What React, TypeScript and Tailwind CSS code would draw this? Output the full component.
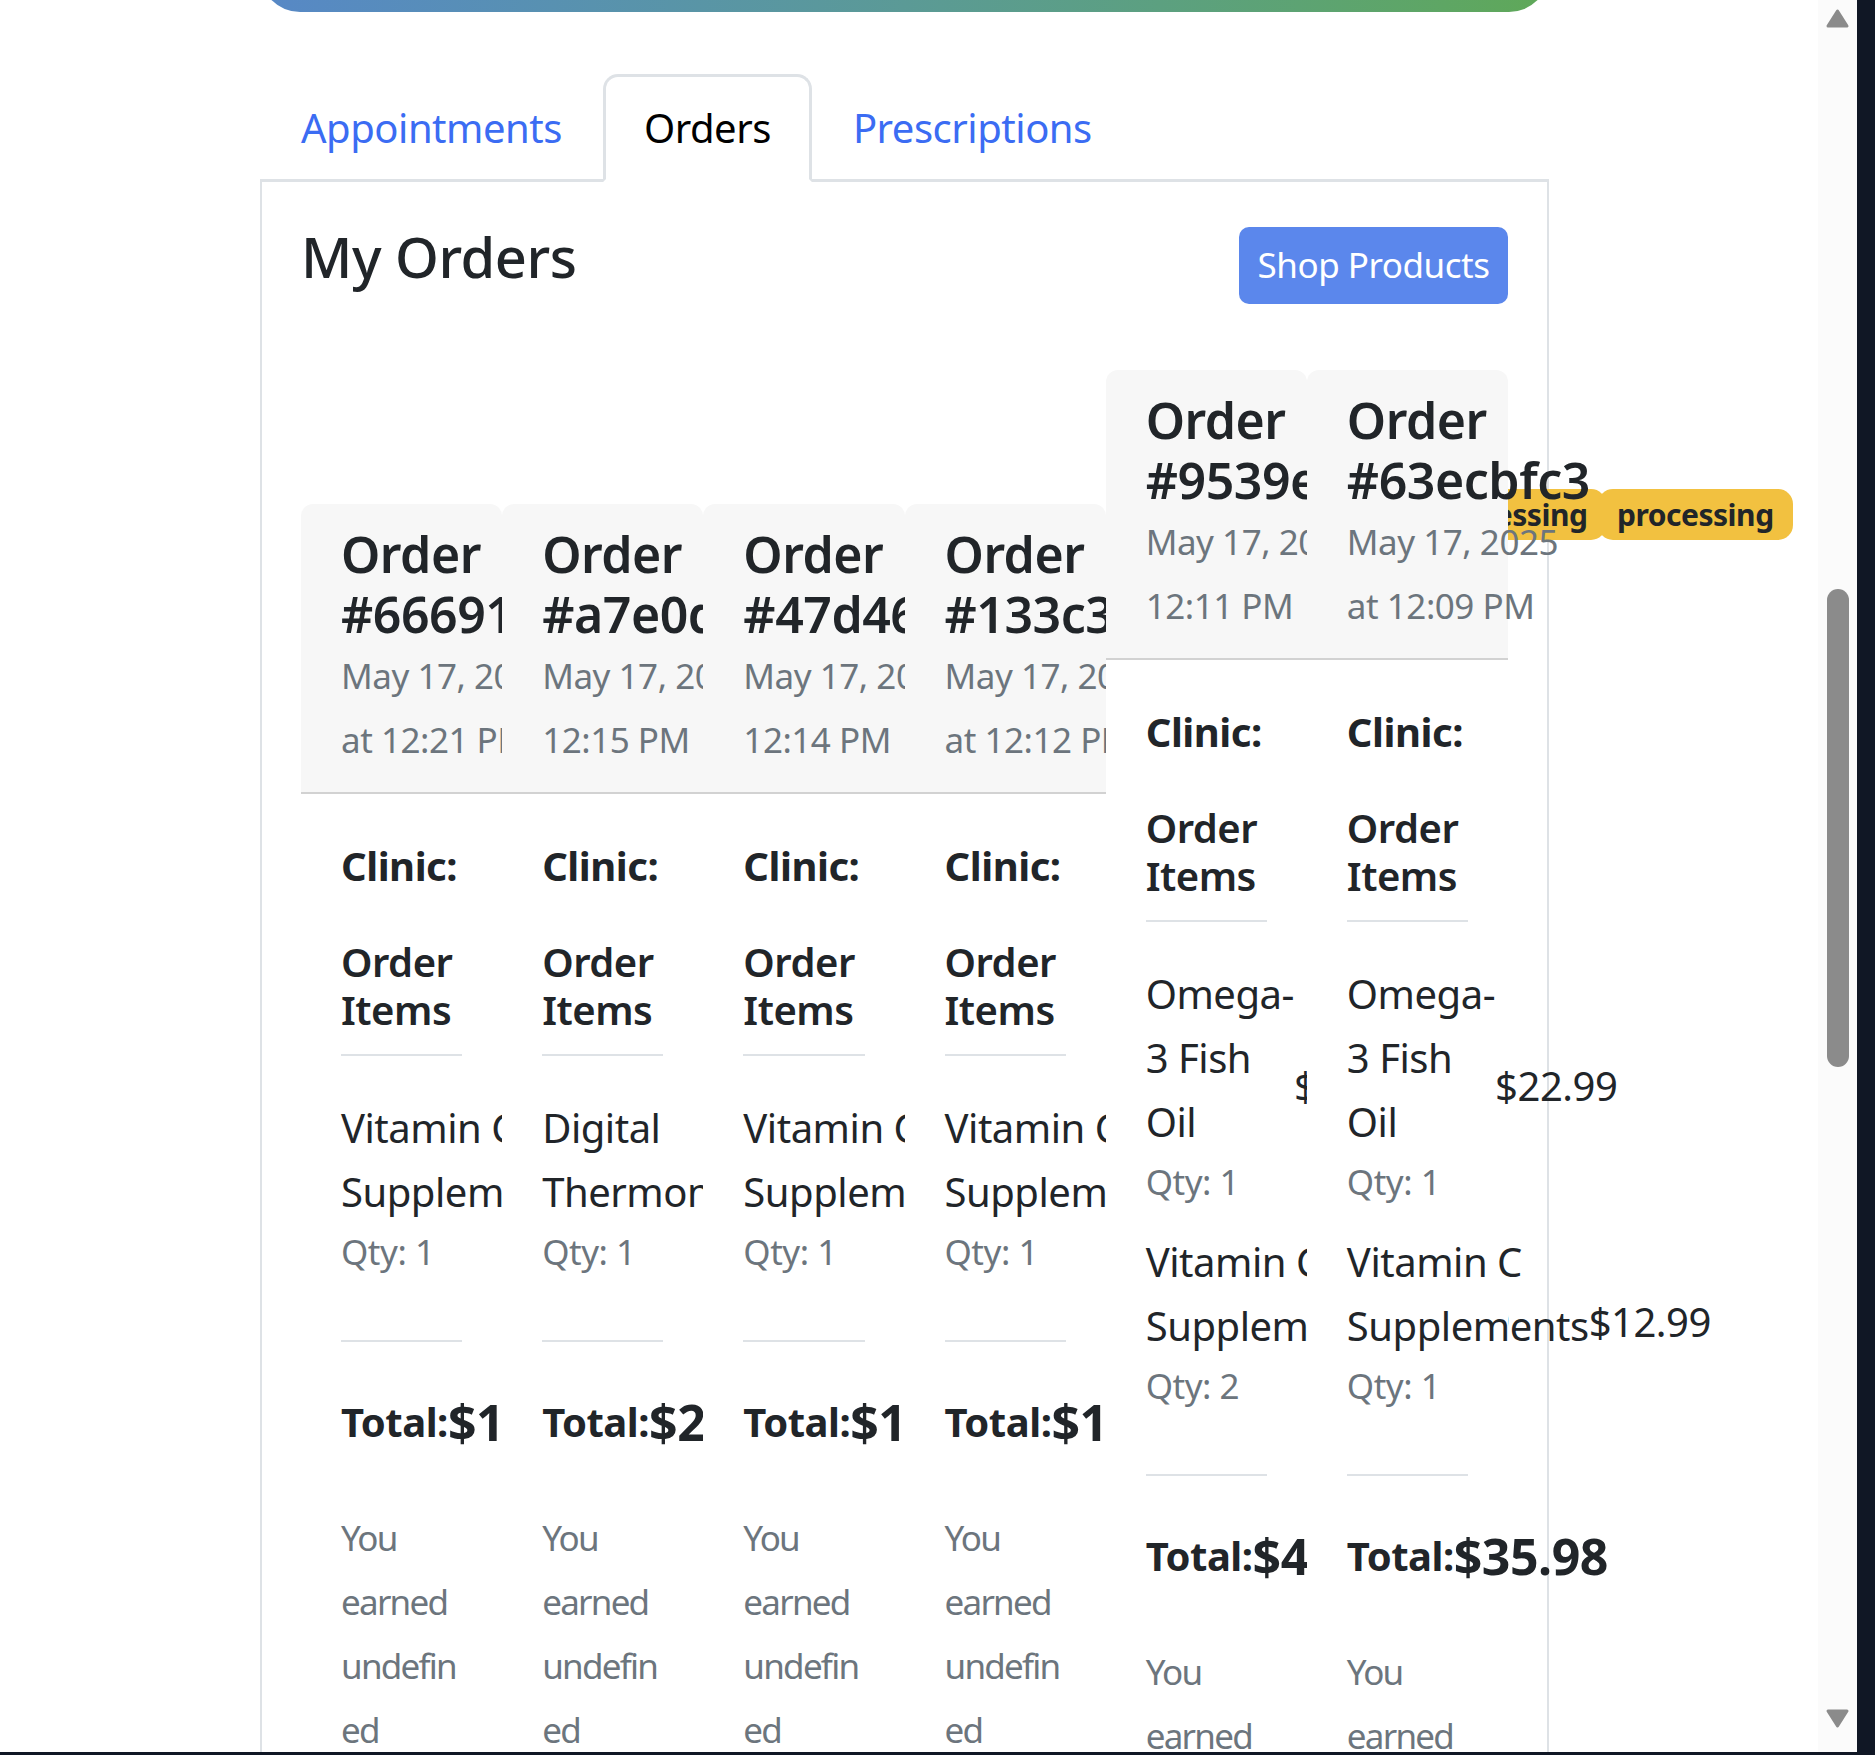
import React from "react";

type Item = { name: string; qty: number; price: string };
type Order = { id: string; time: string; items: Item[]; total: string };

const vitC: Item = { name: "Vitamin C Supplements", qty: 1, price: "$12.99" };
const omega: Item = { name: "Omega-3 Fish Oil", qty: 1, price: "$22.99" };

const orders: Order[] = [
  { id: "66691f2a", time: "12:21 PM", items: [vitC], total: "$12.99" },
  { id: "a7e0d3b1", time: "12:15 PM", items: [{ name: "Digital Thermometer", qty: 1, price: "$24.99" }], total: "$24.99" },
  { id: "47d46c09", time: "12:14 PM", items: [vitC], total: "$12.99" },
  { id: "133c34f1", time: "12:12 PM", items: [vitC], total: "$12.99" },
  { id: "9539e8a4", time: "12:11 PM", items: [omega, { name: "Vitamin C Supplements", qty: 2, price: "$12.99" }], total: "$48.97" },
  { id: "63ecbfc3", time: "12:09 PM", items: [omega, vitC], total: "$35.98" },
];

function ItemName({ name }: { name: string }) {
  if (name.includes("-")) {
    const [a, b] = name.split("-");
    return (
      <>
        {a}-<wbr />
        {b}
      </>
    );
  }
  return <>{name}</>;
}

function OrderCard({ o }: { o: Order }) {
  return (
    <div className="min-w-0 flex-1 rounded-t-[12px] bg-white">
      <div className="flex items-center rounded-t-[12px] border-b-2 border-[#d2d2d2] bg-[#f7f7f7] px-[40px] py-[20px]">
        <div>
          <h5 className="text-[50px] font-semibold leading-[60px] text-[#212529]">Order #{o.id}</h5>
          <p className="text-[35px] leading-[64px] text-[#6c757d]">May 17, 2025 at {o.time}</p>
        </div>
        <span className="ml-[8px] shrink-0 rounded-[15px] bg-[#f2c140] px-[19px] py-[10px] text-[30px] font-bold leading-[31px] text-[#212529]">
          processing
        </span>
      </div>
      <div className="px-[40px] pb-[40px] pt-[40px] text-[#212529]">
        <p className="mb-[40px] text-[40px] leading-[64px]">
          <strong className="font-bold">Clinic:</strong>{" "}
        </p>
        <h6 className="mb-[40px] border-b-2 border-[#dee2e6] pb-[20px] text-[40px] font-semibold leading-[48px]">
          Order Items
        </h6>
        <div>
          {o.items.map((it, i) => (
            <div key={i} className="mb-[20px] flex items-center justify-between">
              <div>
                <div className="text-[40px] leading-[64px]">
                  <ItemName name={it.name} />
                </div>
                <small className="block text-[35px] leading-[56px] text-[#6c757d]">Qty: {it.qty}</small>
              </div>
              <span className="text-[40px] leading-[64px]">{it.price}</span>
            </div>
          ))}
        </div>
        <div className="mt-[60px] border-t-2 border-[#dee2e6] pt-[40px]">
          <div className="flex items-center justify-between">
            <strong className="text-[40px] font-bold leading-[64px]">Total:</strong>
            <strong className="text-[50px] font-bold leading-[80px]">{o.total}</strong>
          </div>
          <p className="mt-[44px] break-words text-[35px] leading-[64px] tracking-[-0.05em] text-[#6c757d]">
            You earned undefined points
          </p>
        </div>
      </div>
    </div>
  );
}

function ScrollBar() {
  return (
    <div className="flex h-full w-[39px] shrink-0 flex-col items-center bg-[#fbfbfb]">
      <svg width="39" height="36" viewBox="0 0 39 36" className="shrink-0">
        <polygon points="19.5,11 29,26 10,26" fill="#8b8b8b" stroke="#8b8b8b" strokeWidth="3" strokeLinejoin="round" />
      </svg>
      <div className="mt-[553px] h-[478px] w-[22px] rounded-full bg-[#8b8b8b]" />
      <svg width="39" height="36" viewBox="0 0 39 36" className="mt-auto mb-[8px] shrink-0">
        <polygon points="10,3 29,3 19.5,18" fill="#8b8b8b" stroke="#8b8b8b" strokeWidth="3" strokeLinejoin="round" />
      </svg>
    </div>
  );
}

export default function App() {
  return (
    <div className="min-h-[1755px] w-full bg-[#101725] font-['Noto_Sans',sans-serif] tracking-[-0.03em]">
      <div className="flex h-[1752px] w-[1857px] overflow-hidden bg-white">
        <div className="min-w-0 flex-1 overflow-hidden">
          <div className="ml-[260px] w-[1289px]">
            <div className="-mt-[88px] h-[100px] rounded-b-[40px] bg-gradient-to-r from-[#5788c6] via-[#5b9a96] to-[#5fa858]" />
            <nav className="mt-[62px] flex border-b-[3px] border-[#dee2e6]">
              <button className="-mb-[3px] border-[3px] border-transparent px-[38px] py-[19px] text-[40px] leading-[64px] text-[#3b6cf3]">
                Appointments
              </button>
              <button className="-mb-[3px] rounded-t-[15px] border-[3px] border-[#dee2e6] border-b-white bg-white px-[38px] py-[19px] text-[40px] leading-[64px] text-black">
                Orders
              </button>
              <button className="-mb-[3px] border-[3px] border-transparent px-[38px] py-[19px] text-[40px] leading-[64px] text-[#3b6cf3]">
                Prescriptions
              </button>
            </nav>
            <div className="border-x-2 border-b-2 border-[#dee2e6] px-[39px] pb-[40px] pt-[38px]">
              <div className="mb-[66px] flex items-start justify-between">
                <h2 className="text-[56px] font-medium leading-[72px] text-[#212529]">My Orders</h2>
                <button className="mt-[7px] flex h-[77px] w-[269px] items-center justify-center rounded-[10px] bg-[#5b87ec] text-[35px] text-white">
                  Shop Products
                </button>
              </div>
              <div className="flex items-center">
                {orders.map((o) => (
                  <OrderCard key={o.id} o={o} />
                ))}
              </div>
            </div>
          </div>
        </div>
        <ScrollBar />
      </div>
    </div>
  );
}
